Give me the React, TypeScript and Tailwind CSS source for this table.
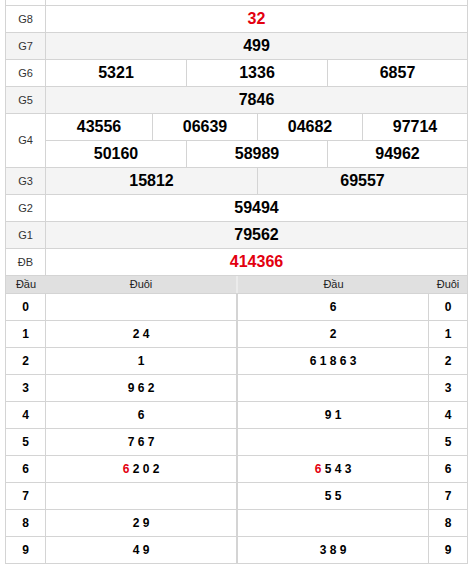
import type { ReactNode } from "react";

type Prize = { label: string; cols: string; nums: string[]; red?: boolean; alt?: boolean };

const prizes: Prize[] = [
  { label: "G8", cols: "grid-cols-1", nums: ["32"], red: true },
  { label: "G7", cols: "grid-cols-1", nums: ["499"], alt: true },
  { label: "G6", cols: "grid-cols-[141px_141px_1fr]", nums: ["5321", "1336", "6857"] },
  { label: "G5", cols: "grid-cols-1", nums: ["7846"], alt: true },
];

const lower: Prize[] = [
  { label: "G3", cols: "grid-cols-[212px_1fr]", nums: ["15812", "69557"], alt: true },
  { label: "G2", cols: "grid-cols-1", nums: ["59494"] },
  { label: "G1", cols: "grid-cols-1", nums: ["79562"], alt: true },
  { label: "ĐB", cols: "grid-cols-1", nums: ["414366"], red: true },
];

// [đầu -> đuôi, đuôi -> đầu]; a leading "*" marks the red digit
const loto: [string, string][] = [
  ["", "6"],
  ["2 4", "2"],
  ["1", "6 1 8 6 3"],
  ["9 6 2", ""],
  ["6", "9 1"],
  ["7 6 7", ""],
  ["*6 2 0 2", "*6 5 4 3"],
  ["", "5 5"],
  ["2 9", ""],
  ["4 9", "3 8 9"],
];

function Label({ children, className = "" }: { children: ReactNode; className?: string }) {
  return (
    <div className={`flex w-[40px] shrink-0 items-center justify-center border-r border-[#d4d4d4] text-[11px] text-[#333] ${className}`}>
      {children}
    </div>
  );
}

function NumRow({ cols, nums, red }: { cols: string; nums: string[]; red?: boolean }) {
  return (
    <div className={`grid h-full flex-1 ${cols}`}>
      {nums.map((n, i) => (
        <div
          key={n}
          className={`flex items-center justify-center text-[16px] font-bold ${
            i < nums.length - 1 ? "border-r border-[#d4d4d4]" : ""
          } ${red ? "text-[#e3000f]" : "text-black"}`}
        >
          {n}
        </div>
      ))}
    </div>
  );
}

function PrizeRow({ p }: { p: Prize }) {
  return (
    <div className={`flex h-[27px] border-b border-[#d4d4d4] ${p.alt ? "bg-[#f4f4f4]" : "bg-white"}`}>
      <Label>{p.label}</Label>
      <NumRow cols={p.cols} nums={p.nums} red={p.red} />
    </div>
  );
}

function Digits({ value }: { value: string }) {
  if (value.startsWith("*")) {
    return (
      <span>
        <span className="text-[#e3000f]">{value[1]}</span>
        {value.slice(2)}
      </span>
    );
  }
  return <span>{value}</span>;
}

export default function App() {
  return (
    <div className="h-[565px] w-[471px] bg-white pl-[5px] font-['Liberation_Sans',Arial,sans-serif]">
      <div className="w-[463px] border-x border-[#d4d4d4]">
        {/* tail of the row above, cut off by the screenshot */}
        <div className="flex h-[6px] border-b border-[#d4d4d4]">
          <div className="w-[40px] border-r border-[#d4d4d4]" />
        </div>

        {prizes.map((p) => (
          <PrizeRow key={p.label} p={p} />
        ))}

        {/* G4 spans two lines */}
        <div className="flex h-[54px] border-b border-[#d4d4d4] bg-white">
          <Label>G4</Label>
          <div className="flex flex-1 flex-col">
            <div className="h-[27px] border-b border-[#d4d4d4]">
              <NumRow cols="grid-cols-[107px_105px_105px_1fr]" nums={["43556", "06639", "04682", "97714"]} />
            </div>
            <div className="h-[26px]">
              <NumRow cols="grid-cols-[141px_141px_1fr]" nums={["50160", "58989", "94962"]} />
            </div>
          </div>
        </div>

        {lower.map((p) => (
          <PrizeRow key={p.label} p={p} />
        ))}

        {/* Loto table */}
        <div className="flex h-[18px] border-b border-[#d4d4d4] bg-[#e0e0e0] text-[11px] text-[#222]">
          <div className="flex w-[40px] items-center justify-center">Đầu</div>
          <div className="flex w-[192px] items-center justify-center border-r-2 border-[#ebebeb]">Đuôi</div>
          <div className="flex w-[191px] items-center justify-center">Đầu</div>
          <div className="flex flex-1 items-center justify-center">Đuôi</div>
        </div>

        {loto.map(([tail, head], i) => (
          <div key={i} className="flex h-[27px] border-b border-[#d4d4d4] text-[12px] font-bold text-black">
            <div className="flex w-[40px] items-center justify-center border-r border-[#d4d4d4]">{i}</div>
            <div className="flex w-[192px] items-center justify-center border-r-2 border-[#d4d4d4]">
              <Digits value={tail} />
            </div>
            <div className="flex w-[191px] items-center justify-center border-r border-[#d4d4d4]">
              <Digits value={head} />
            </div>
            <div className="flex flex-1 items-center justify-center">{i}</div>
          </div>
        ))}
      </div>
    </div>
  );
}
